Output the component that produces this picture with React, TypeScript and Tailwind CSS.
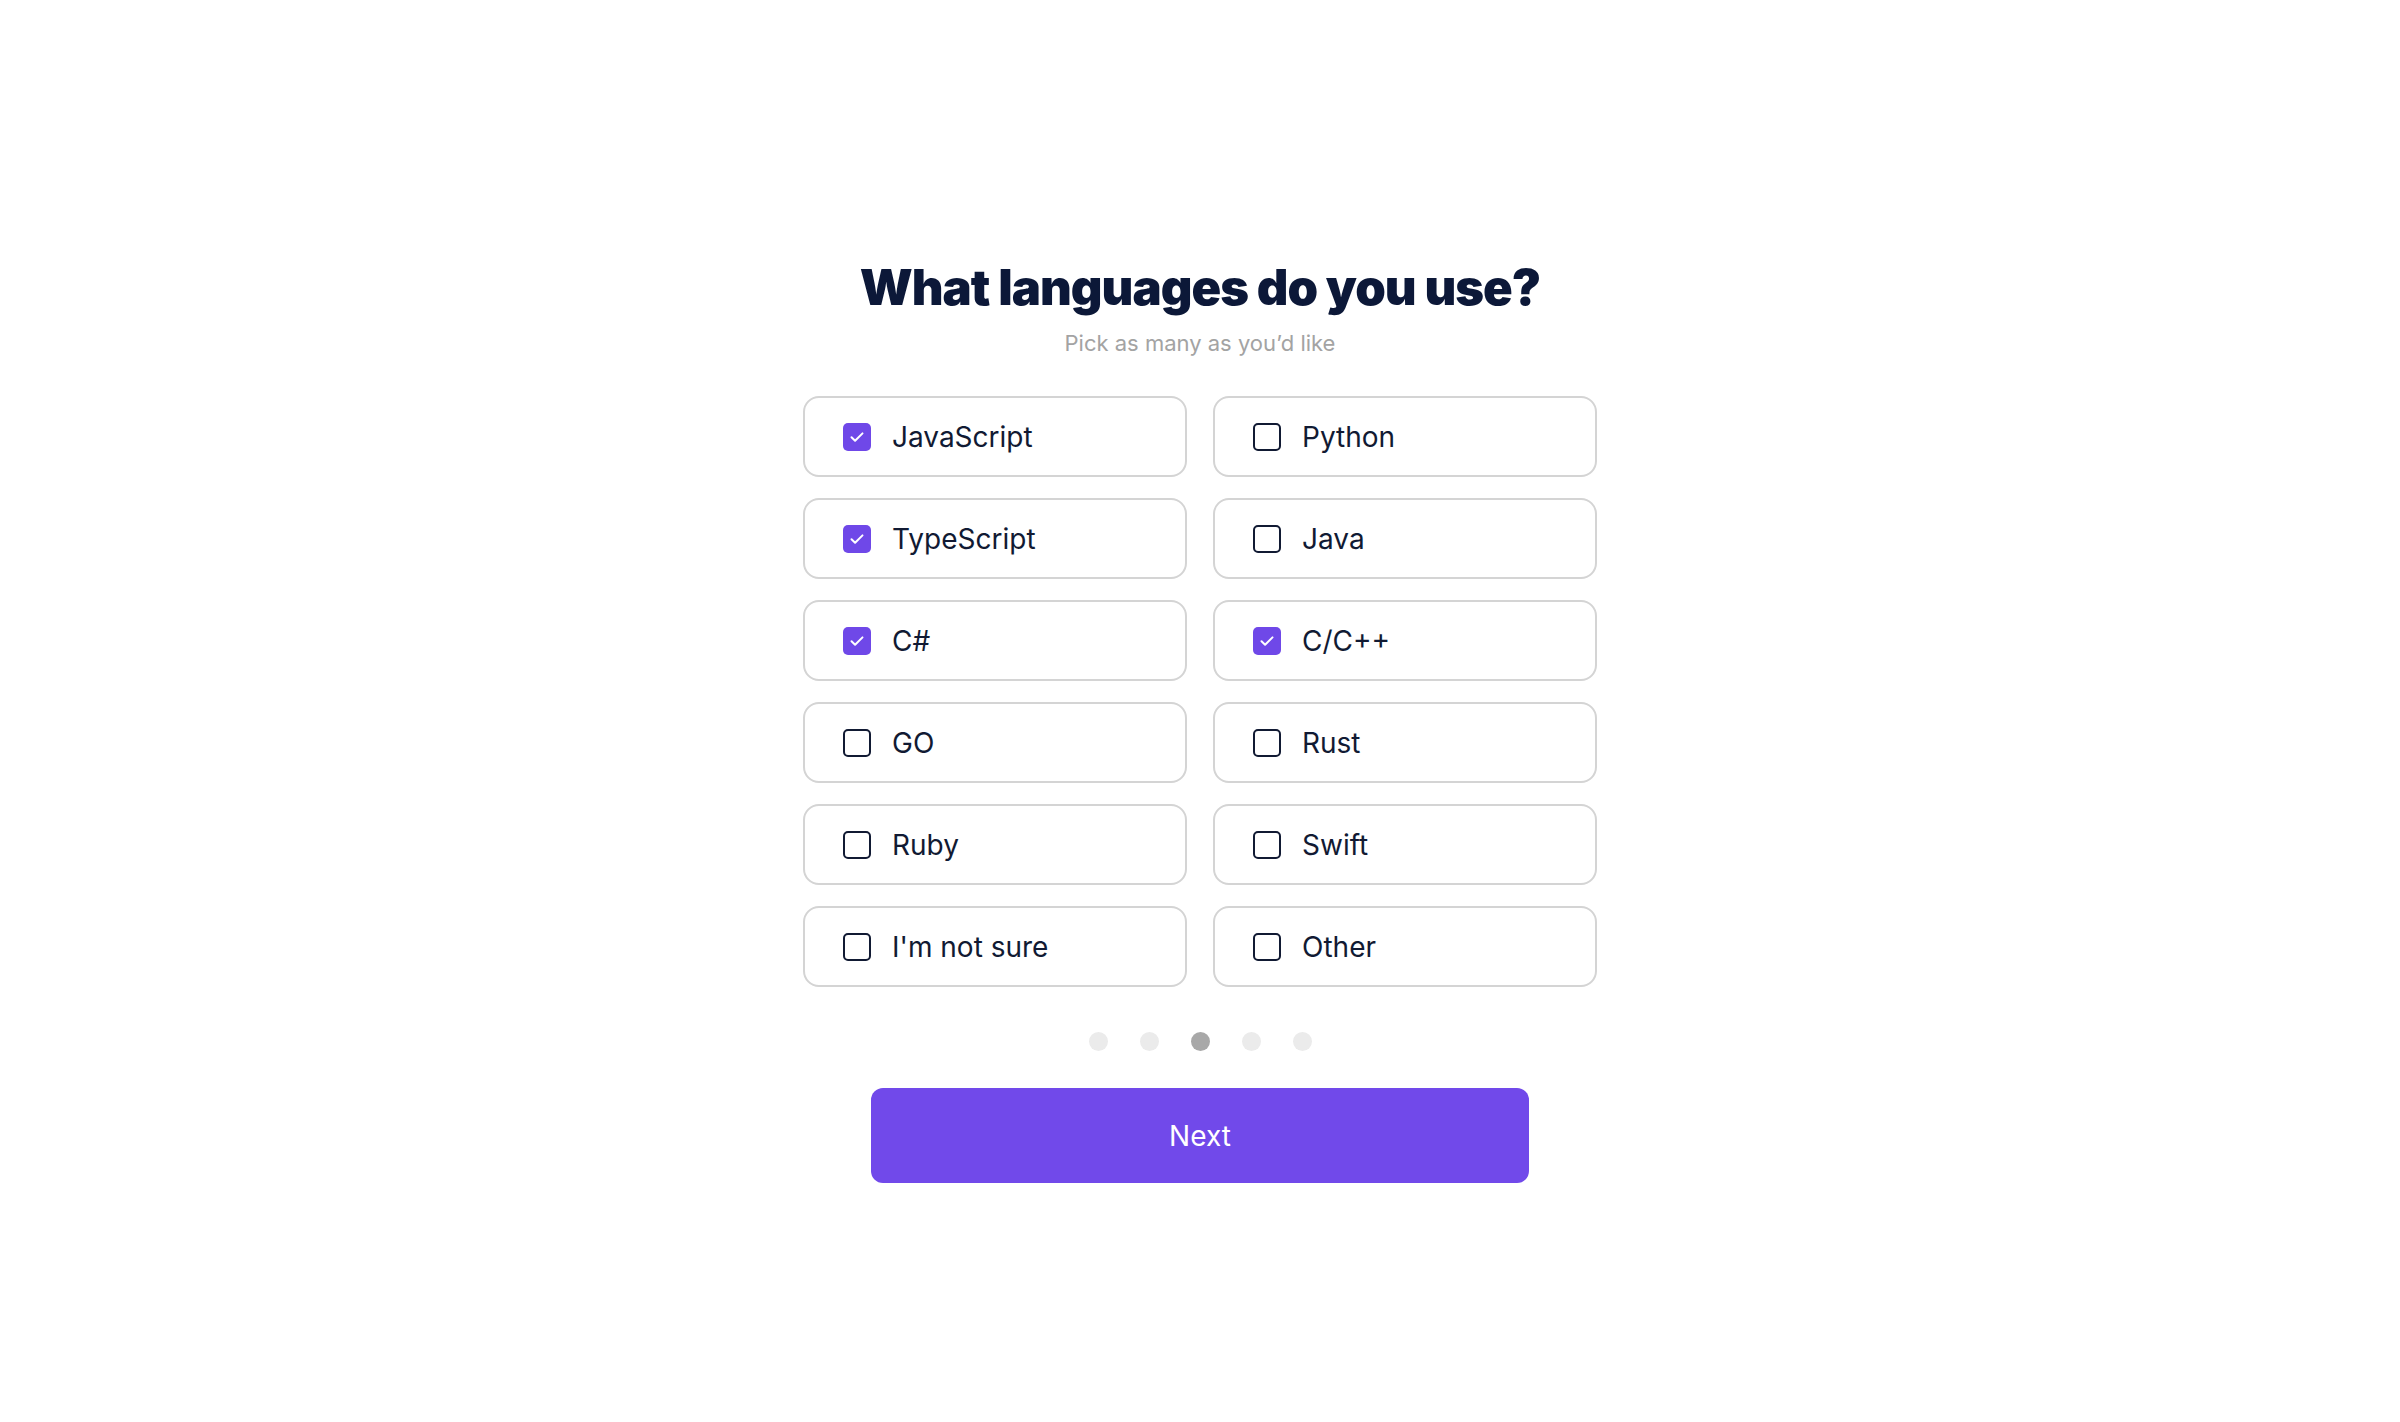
const languages = [
  { name: "JavaScript", checked: true },
  { name: "Python", checked: false },
  { name: "TypeScript", checked: true },
  { name: "Java", checked: false },
  { name: "C#", checked: true },
  { name: "C/C++", checked: true },
  { name: "GO", checked: false },
  { name: "Rust", checked: false },
  { name: "Ruby", checked: false },
  { name: "Swift", checked: false },
  { name: "I'm not sure", checked: false },
  { name: "Other", checked: false },
];

function Checkbox({ checked }: { checked: boolean }) {
  if (checked) {
    return (
      <span className="flex h-[28px] w-[28px] shrink-0 items-center justify-center rounded-[5px] bg-[#6f48e8]">
        <svg width="20" height="20" viewBox="0 0 20 20" fill="none">
          <path d="M4.5 10.2l3.6 3.6L15.5 6.4" stroke="white" strokeWidth="2" strokeLinecap="round" strokeLinejoin="round" />
        </svg>
      </span>
    );
  }
  return <span className="h-[28px] w-[28px] shrink-0 rounded-[5px] border-2 border-[#111a33] bg-white" />;
}

export default function App() {
  const active = 2;

  return (
    <div className="min-h-screen bg-white pt-[258px] font-['Inter',sans-serif]">
      <div className="mx-auto flex w-[794px] flex-col items-center">
        <h1 className="text-[49px] font-black leading-[60px] tracking-[-0.02em] text-[#0c1838]">
          What languages do you use?
        </h1>
        <p className="mt-[10px] text-[22px] leading-[30px] text-[#a3a3a3]">Pick as many as you’d like</p>

        <div className="mt-[38px] grid w-full grid-cols-2 gap-x-[26px] gap-y-[21px]">
          {languages.map((lang) => (
            <div
              key={lang.name}
              className="flex h-[81px] items-center gap-[21px] rounded-[16px] border-2 border-[#d4d4d4] bg-white pl-[38px]"
            >
              <Checkbox checked={lang.checked} />
              <span className="text-[28px] leading-none text-[#111a33]">{lang.name}</span>
            </div>
          ))}
        </div>

        <div className="mt-[45px] flex items-center gap-[32px]">
          {[0, 1, 2, 3, 4].map((i) => (
            <span
              key={i}
              className={i === active ? "h-[19px] w-[19px] rounded-full bg-[#a8a8a8]" : "h-[19px] w-[19px] rounded-full bg-[#ebebeb]"}
            />
          ))}
        </div>

        <button className="mt-[37px] h-[95px] w-[658px] rounded-[12px] bg-[#7149ea] text-[28px] text-white">
          Next
        </button>
      </div>
    </div>
  );
}
